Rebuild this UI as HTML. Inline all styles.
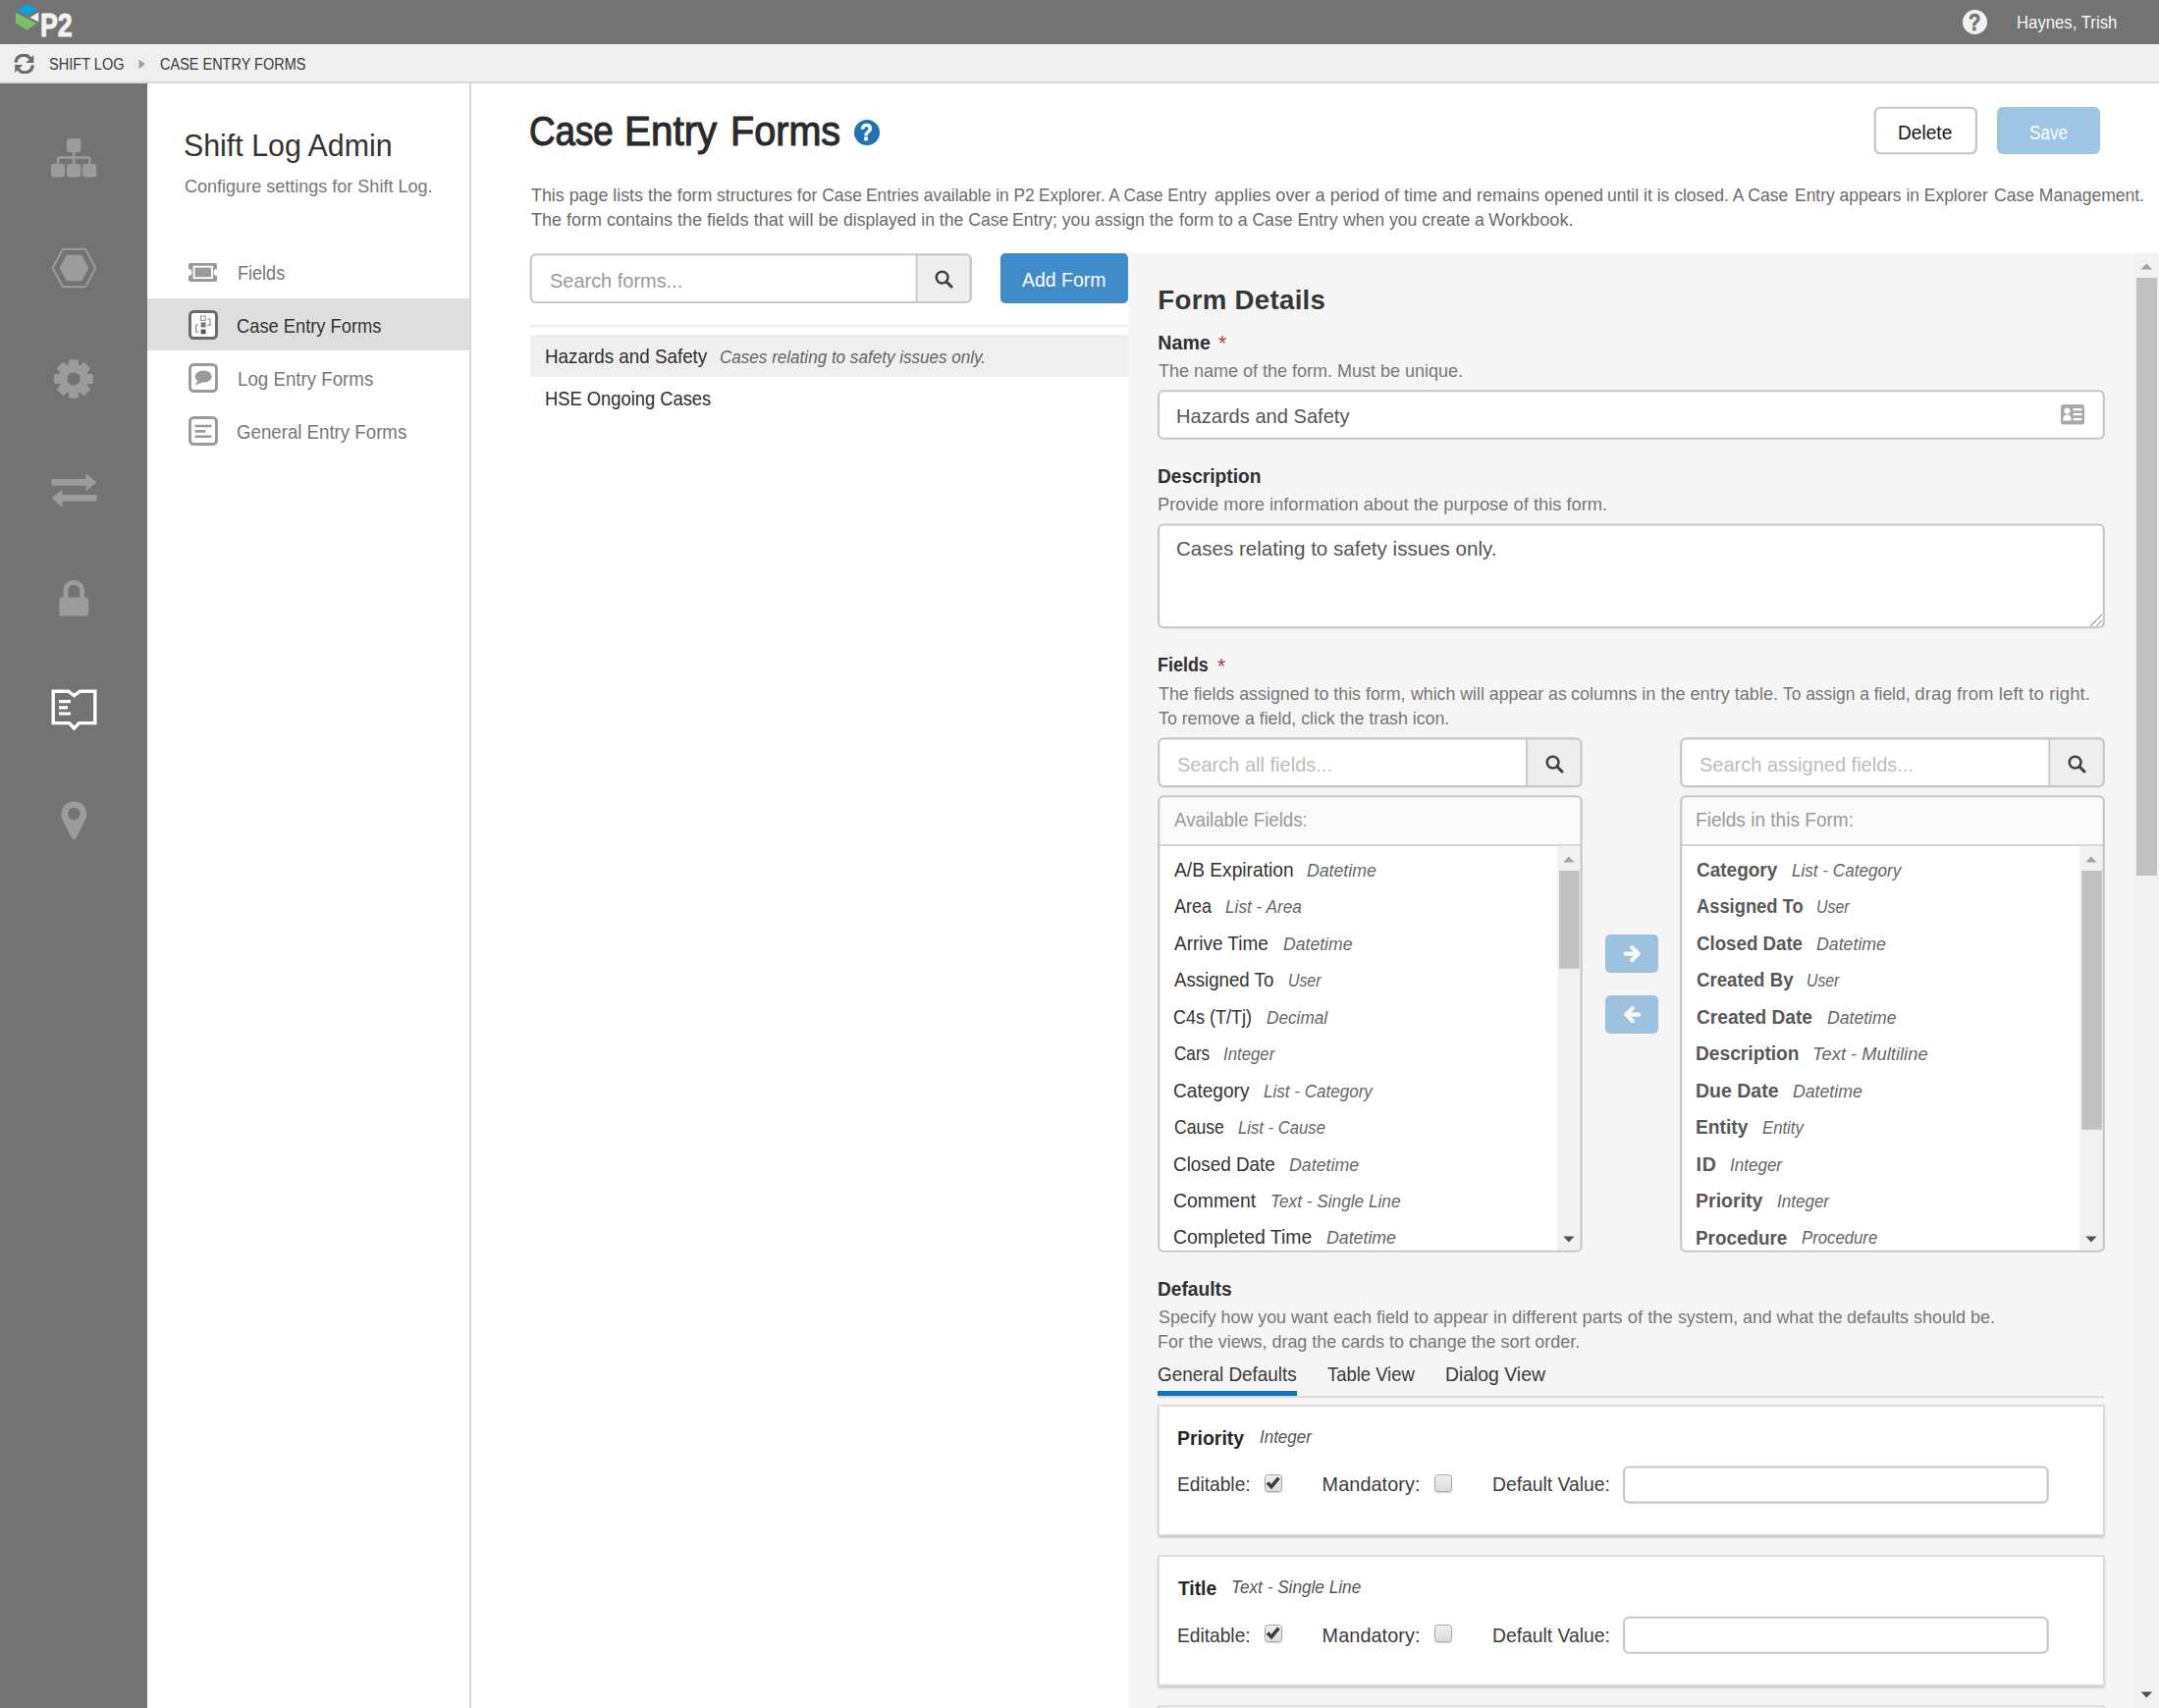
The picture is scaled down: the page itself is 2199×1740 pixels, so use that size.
<!DOCTYPE html>
<html lang="en"><head><meta charset="utf-8"><title>Case Entry Forms</title>
<style>
html,body{margin:0;padding:0}
body{width:2199px;height:1740px;background:#fff;font-family:"Liberation Sans", sans-serif;}
#r{position:absolute;left:0;top:0;width:2199px;height:1740px;overflow:hidden;background:#fff}
#r>div,#r>svg{position:absolute;box-sizing:border-box}
.t{white-space:pre;transform-origin:0 0}
.g{left:0;top:0}
.g>span{position:absolute;display:block}
</style></head>
<body>
<div id="r">
<div style="left:0px;top:0px;width:2199px;height:45px;background:#737373;"></div>
<div style="left:0px;top:45px;width:2199px;height:38px;background:#efefef;"></div>
<div style="left:0px;top:83px;width:2199px;height:2px;background:#dadada;"></div>
<div style="left:0px;top:85px;width:150px;height:1655px;background:#737373;"></div>
<div style="left:478px;top:85px;width:2px;height:1655px;background:#d6d6d6;"></div>
<div style="left:150px;top:304px;width:328px;height:53px;background:#dedede;"></div>
<svg style="left:14px;top:3px" width="64" height="37" viewBox="0 0 64 37">
<polygon points="3.6,6.8 13.6,0.9 23.8,6.3 13.6,12.9" fill="#0ea1db"/>
<polygon points="1.9,9.75 23.4,20.7 13.6,27.8 1.9,20.6" fill="#7cbf6a"/>
<polygon points="16.4,14.8 25.3,9.6 25.3,19.2" fill="#f2f2f2"/>
</svg>
<div class="t" style="left:40.80px;top:9.41px;font-size:33.4px;line-height:33.4px;color:#f2f2f2;transform:scaleX(0.8022);font-weight:700;-webkit-text-stroke:1.0px #f2f2f2;">P2</div>
<div style="left:1998.7px;top:10px;width:25.4px;height:25.4px;border-radius:13px;background:#f2f2f2"></div>
<div class="t" style="left:2005.27px;top:12.25px;font-size:23px;line-height:23px;color:#737373;transform:scaleX(0.8750);font-weight:700;-webkit-text-stroke:0.7px #737373;">?</div>
<div class="t" style="left:2054.10px;top:14.29px;font-size:18.6px;line-height:18.6px;color:#f7f7f7;transform:scaleX(0.9000);">Haynes, Trish</div>
<svg style="left:14px;top:55px" width="22" height="20" viewBox="0 0 22 20">
<path d="M2.2 8.6 A8 8 0 0 1 16.8 4.6" fill="none" stroke="#6a6a6a" stroke-width="3.2"/>
<polygon points="20.3,1 20.3,9 12.3,9" fill="#6a6a6a"/>
<path d="M19.3 11.4 A8 8 0 0 1 4.7 15.4" fill="none" stroke="#6a6a6a" stroke-width="3.2"/>
<polygon points="1.2,19 1.2,11 9.2,11" fill="#6a6a6a"/>
</svg>
<div class="t" style="left:49.50px;top:56.98px;font-size:17.2px;line-height:17.2px;color:#3a3a3a;transform:scaleX(0.8467);">SHIFT LOG</div>
<svg style="left:141px;top:60px" width="8" height="11" viewBox="0 0 8 11"><polygon points="0.5,0.5 7,5.3 0.5,10.2" fill="#a0a0a0"/></svg>
<div class="t" style="left:162.50px;top:56.98px;font-size:17.2px;line-height:17.2px;color:#3a3a3a;transform:scaleX(0.8431);">CASE ENTRY FORMS</div>
<svg style="left:52px;top:141px" width="47" height="40" viewBox="0 0 47 40" fill="#9c9c9c">
<rect x="16" y="0" width="14.5" height="14" rx="3"/>
<rect x="0" y="26" width="14" height="13.6" rx="3"/><rect x="16" y="26" width="14.5" height="13.6" rx="3"/><rect x="32" y="26" width="14.3" height="13.6" rx="3"/>
<path d="M23.2 13 V27 M7 27 V21.5 Q7 19.5 9 19.5 H37.4 Q39.4 19.5 39.4 21.5 V27" fill="none" stroke="#9c9c9c" stroke-width="2.6"/>
</svg>
<svg style="left:52px;top:252px" width="47" height="42" viewBox="0 0 47 42">
<polygon points="1.6,21 12,1.8 35,1.8 45.4,21 35,40.2 12,40.2" fill="none" stroke="#9c9c9c" stroke-width="1.9"/>
<polygon points="8.6,21 15.8,7.8 31.2,7.8 38.4,21 31.2,34.2 15.8,34.2" fill="#9c9c9c"/>
</svg>
<svg style="left:55px;top:366px" width="40" height="40" viewBox="-20 -20 40 40" fill="#9c9c9c">
<rect x="-4.9" y="-19.8" width="9.8" height="9" rx="1.4" transform="rotate(0)"/><rect x="-4.9" y="-19.8" width="9.8" height="9" rx="1.4" transform="rotate(45)"/><rect x="-4.9" y="-19.8" width="9.8" height="9" rx="1.4" transform="rotate(90)"/><rect x="-4.9" y="-19.8" width="9.8" height="9" rx="1.4" transform="rotate(135)"/><rect x="-4.9" y="-19.8" width="9.8" height="9" rx="1.4" transform="rotate(180)"/><rect x="-4.9" y="-19.8" width="9.8" height="9" rx="1.4" transform="rotate(225)"/><rect x="-4.9" y="-19.8" width="9.8" height="9" rx="1.4" transform="rotate(270)"/><rect x="-4.9" y="-19.8" width="9.8" height="9" rx="1.4" transform="rotate(315)"/><circle r="15.2"/><circle r="6.6" fill="#737373"/></svg>
<svg style="left:52px;top:482px" width="47" height="36" viewBox="0 0 47 36" fill="#9c9c9c">
<rect x="0.5" y="6" width="36.5" height="6.8" rx="1"/><polygon points="35.5,0 46.5,9.2 35.5,18.4"/>
<rect x="10" y="22" width="36.5" height="6.8" rx="1"/><polygon points="11.5,16.4 0.5,25.6 11.5,35"/>
</svg>
<svg style="left:60px;top:591px" width="31" height="37" viewBox="0 0 31 37">
<path d="M7 19 V10.6 A8.3 8.3 0 0 1 23.6 10.6 V19" fill="none" stroke="#9c9c9c" stroke-width="4.8"/>
<rect x="0.4" y="17.6" width="29.8" height="18.8" rx="2.6" fill="#9c9c9c"/>
</svg>
<svg style="left:52px;top:702px" width="47" height="43" viewBox="0 0 47 43">
<path d="M2.2 2.2 H17.5 L23.5 6.6 L29.5 2.2 H44.8 V34.6 H28.5 L23.5 40 L18.5 34.6 H2.2 Z" fill="none" stroke="#fff" stroke-width="3.4" stroke-linejoin="miter"/>
<path d="M8 12.6 H20 M8 18.8 H17 M8 25 H20" stroke="#fff" stroke-width="3.2" fill="none"/>
</svg>
<svg style="left:62px;top:816px" width="27" height="40" viewBox="0 0 27 40">
<path d="M13.3 0.4 C5.8 0.4 0.4 5.8 0.4 13 C0.4 16 1.2 18.2 2.4 20.6 L11 37.6 Q13.3 41 15.6 37.6 L24.2 20.6 C25.4 18.2 26.2 16 26.2 13 C26.2 5.8 20.8 0.4 13.3 0.4 Z" fill="#9c9c9c"/>
<circle cx="13.3" cy="13" r="6.2" fill="#737373"/></svg>
<div class="t" style="left:187.00px;top:133.17px;font-size:30.5px;line-height:30.5px;color:#333;transform:scaleX(0.9950);">Shift Log Admin</div>
<div class="t" style="left:187.80px;top:181.07px;font-size:18.5px;line-height:18.5px;color:#777;transform:scaleX(0.9744);">Configure settings for Shift Log.</div>
<svg style="left:191px;top:267px" width="31" height="21" viewBox="0 0 31 21">
<path d="M3 1 H28 Q30 1 30 3 V7 A3.4 3.4 0 0 0 30 14 V18 Q30 20 28 20 H3 Q1 20 1 18 V14 A3.4 3.4 0 0 0 1 7 V3 Q1 1 3 1 Z" fill="#9a9a9a"/>
<rect x="5.6" y="3.8" width="20.3" height="13.2" fill="#fff"/><rect x="7.5" y="5.6" width="16.5" height="9.6" fill="#9a9a9a"/></svg>
<div class="t" style="left:241.69px;top:268.77px;font-size:19.8px;line-height:19.8px;color:#777;transform:scaleX(0.9137);">Fields</div>
<svg style="left:192px;top:316px" width="30" height="30" viewBox="0 0 30 30">
<rect x="1.5" y="1.5" width="27" height="27" rx="3.8" fill="#fff" stroke="#6a6a6a" stroke-width="2.9"/>
<rect x="12.6" y="6" width="4.6" height="4.4" fill="none" stroke="#888" stroke-width="1"/>
<rect x="12.6" y="12.4" width="5" height="5" fill="#777"/><rect x="12.6" y="19.6" width="5" height="4.6" fill="#555"/>
<path d="M10.4 15 H7.6 V22 H10.4 M19.4 9 H22 V15.4 H19.4" fill="none" stroke="#888" stroke-width="1.1"/>
</svg>
<div class="t" style="left:241.28px;top:322.77px;font-size:19.8px;line-height:19.8px;color:#333;transform:scaleX(0.9250);">Case Entry Forms</div>
<svg style="left:192px;top:370px" width="30" height="30" viewBox="0 0 30 30">
<rect x="1.5" y="1.5" width="27" height="27" rx="3.8" fill="#fff" stroke="#9a9a9a" stroke-width="2.9"/>
<ellipse cx="15.2" cy="13.6" rx="8.6" ry="6.2" fill="#9a9a9a"/><polygon points="9.4,17.4 7,22.6 14,19.4" fill="#9a9a9a"/></svg>
<div class="t" style="left:241.65px;top:376.77px;font-size:19.8px;line-height:19.8px;color:#777;transform:scaleX(0.9455);">Log Entry Forms</div>
<svg style="left:192px;top:424px" width="30" height="30" viewBox="0 0 30 30">
<rect x="1.5" y="1.5" width="27" height="27" rx="3.8" fill="#fff" stroke="#9a9a9a" stroke-width="2.9"/>
<path d="M6.6 10 H23.4 M6.6 15.4 H17.4 M6.6 20.8 H23.4" stroke="#9a9a9a" stroke-width="2.6" fill="none"/></svg>
<div class="t" style="left:241.26px;top:430.77px;font-size:19.8px;line-height:19.8px;color:#777;transform:scaleX(0.9437);">General Entry Forms</div>
<div class="g"><span class="t" style="left:539.40px;top:112.90px;font-size:42px;line-height:42px;color:#2a2a2a;transform:scaleX(0.8744);-webkit-text-stroke:1.1px #2a2a2a;">Case</span> <span class="t" style="left:636.46px;top:112.90px;font-size:42px;line-height:42px;color:#2a2a2a;transform:scaleX(0.9618);-webkit-text-stroke:1.1px #2a2a2a;">Entry</span> <span class="t" style="left:744.02px;top:112.90px;font-size:42px;line-height:42px;color:#2a2a2a;transform:scaleX(0.9427);-webkit-text-stroke:1.1px #2a2a2a;">Forms</span></div>
<div style="left:869.5px;top:122px;width:26px;height:26px;border-radius:13px;background:#1f72b3"></div>
<div class="t" style="left:876.14px;top:124.45px;font-size:23px;line-height:23px;color:#fff;transform:scaleX(0.9083);font-weight:700;-webkit-text-stroke:0.5px #fff;">?</div>
<div class="g"><span class="t" style="left:540.60px;top:190.18px;font-size:18.5px;line-height:18.5px;color:#6b6b6b;transform:scaleX(0.9639);">This page lists the form </span><span class="t" style="left:729.90px;top:190.18px;font-size:18.5px;line-height:18.5px;color:#6b6b6b;transform:scaleX(0.9473);">structures for Case </span><span class="t" style="left:881.86px;top:190.18px;font-size:18.5px;line-height:18.5px;color:#6b6b6b;transform:scaleX(0.9379);">Entries available in P2 </span><span class="t" style="left:1058.38px;top:190.18px;font-size:18.5px;line-height:18.5px;color:#6b6b6b;transform:scaleX(0.9247);">Explorer. A Case Entry </span><span class="t" style="left:1237.10px;top:190.18px;font-size:18.5px;line-height:18.5px;color:#6b6b6b;transform:scaleX(0.9779);">applies over a period of </span><span class="t" style="left:1430.20px;top:190.18px;font-size:18.5px;line-height:18.5px;color:#6b6b6b;transform:scaleX(0.9719);">time and remains opened </span><span class="t" style="left:1637.15px;top:190.18px;font-size:18.5px;line-height:18.5px;color:#6b6b6b;transform:scaleX(0.9477);">until it is closed. A Case </span><span class="t" style="left:1828.16px;top:190.18px;font-size:18.5px;line-height:18.5px;color:#6b6b6b;transform:scaleX(0.9426);">Entry appears in Explorer </span><span class="t" style="left:2030.70px;top:190.18px;font-size:18.5px;line-height:18.5px;color:#6b6b6b;transform:scaleX(0.9475);">Case Management.</span></div>
<div class="g"><span class="t" style="left:540.60px;top:215.18px;font-size:18.5px;line-height:18.5px;color:#6b6b6b;transform:scaleX(0.9730);">The form contains the </span><span class="t" style="left:719.70px;top:215.18px;font-size:18.5px;line-height:18.5px;color:#6b6b6b;transform:scaleX(0.9860);">fields that will be </span><span class="t" style="left:858.60px;top:215.18px;font-size:18.5px;line-height:18.5px;color:#6b6b6b;transform:scaleX(0.9515);">displayed in the Case </span><span class="t" style="left:1030.85px;top:215.18px;font-size:18.5px;line-height:18.5px;color:#6b6b6b;transform:scaleX(0.9505);">Entry; you assign the </span><span class="t" style="left:1200.90px;top:215.18px;font-size:18.5px;line-height:18.5px;color:#6b6b6b;transform:scaleX(0.9520);">form to a Case Entry </span><span class="t" style="left:1368.25px;top:215.18px;font-size:18.5px;line-height:18.5px;color:#6b6b6b;transform:scaleX(0.9519);">when you create a </span><span class="t" style="left:1516.10px;top:215.18px;font-size:18.5px;line-height:18.5px;color:#6b6b6b;transform:scaleX(0.9834);">Workbook.</span></div>
<svg style="left:1906px;top:106px" width="110" height="54"><g transform="translate(-1906,-106)"><rect x="1909.73" y="109.73" width="103.15" height="46.55" rx="5.5" fill="#fff"/><rect x="1909.73" y="109.73" width="103.15" height="46.55" rx="5.5" fill="none" stroke="#c4c4c4" stroke-width="2.15"/></g></svg>
<div class="t" style="left:1933.24px;top:124.80px;font-size:20px;line-height:20px;color:#151515;transform:scaleX(0.9561);">Delete</div>
<div style="left:2034px;top:109px;width:104.5px;height:48px;border-radius:6px;background:#9fc5e5"></div>
<div class="t" style="left:2067.20px;top:124.80px;font-size:20px;line-height:20px;color:#fdfdfd;transform:scaleX(0.8534);">Save</div>
<svg style="left:537px;top:256px" width="455" height="56"><g transform="translate(-537,-256)"><rect x="540.73" y="259.22" width="448.05" height="48.75" rx="5" fill="#fff"/><path d="M933 259.4 H983.6 A5 5 0 0 1 988.6 264.4 V302.8 A5 5 0 0 1 983.6 307.8 H933 Z" fill="#eeeeee"/><rect x="932.6" y="258.5" width="1.8" height="50.19999999999999" fill="#c6c6c6"/><rect x="540.73" y="259.22" width="448.05" height="48.75" rx="5" fill="none" stroke="#c6c6c6" stroke-width="2.15"/></g></svg>
<div class="t" style="left:560.30px;top:275.15px;font-size:21px;line-height:21px;color:#9a9a9a;transform:scaleX(0.9499);">Search forms...</div>
<svg style="left:952px;top:275px" width="19" height="19" viewBox="0 0 19 19"><circle cx="7.6" cy="7.6" r="5.9" fill="none" stroke="#404040" stroke-width="2.5"/><path d="M12 12 L17 17" stroke="#404040" stroke-width="3.1" stroke-linecap="round"/></svg>
<div style="left:1019px;top:258.4px;width:130px;height:50.4px;border-radius:5px;background:#408bca"></div>
<div class="t" style="left:1041.40px;top:274.90px;font-size:20px;line-height:20px;color:#fff;transform:scaleX(0.9731);">Add Form</div>
<div style="left:540px;top:331.3px;width:609px;height:1.7px;background:#ececec;"></div>
<div style="left:540px;top:341.3px;width:609px;height:42.4px;background:#efefef;"></div>
<div class="t" style="left:554.65px;top:353.77px;font-size:19.8px;line-height:19.8px;color:#2e2e2e;transform:scaleX(0.9512);">Hazards and Safety</div>
<div class="t" style="left:732.58px;top:354.88px;font-size:18.5px;line-height:18.5px;color:#666;transform:scaleX(0.9229);font-style:italic;">Cases relating to safety issues only.</div>
<div class="t" style="left:554.67px;top:396.77px;font-size:19.8px;line-height:19.8px;color:#2e2e2e;transform:scaleX(0.9271);">HSE Ongoing Cases</div>
<div style="left:1149px;top:258px;width:1050px;height:1482px;background:#f5f5f5;"></div>
<div style="left:2174px;top:258px;width:25px;height:1482px;background:#f1f1f1;"></div>
<div style="left:2176px;top:283px;width:21px;height:609px;background:#c1c1c1;"></div>
<svg style="left:2180px;top:267.5px" width="13" height="7" viewBox="0 0 13 7"><polygon points="0.5,6.5 6.3,0.4 12.2,6.5" fill="#a3a3a3"/></svg>
<svg style="left:2180px;top:1722.5px" width="13" height="7" viewBox="0 0 13 7"><polygon points="0.5,0.5 6.3,6.6 12.2,0.5" fill="#505050"/></svg>
<div class="t" style="left:1179.30px;top:292.14px;font-size:27.6px;line-height:27.6px;color:#363636;letter-spacing:0.319px;font-weight:700;">Form Details</div>
<div class="t" style="left:1179.30px;top:339.74px;font-size:19.6px;line-height:19.6px;color:#303030;letter-spacing:0.077px;font-weight:700;">Name</div>
<div class="t" style="left:1241.00px;top:338.88px;font-size:22.5px;line-height:22.5px;color:#a94442;transform:scaleX(0.9333);">*</div>
<div class="t" style="left:1179.80px;top:369.07px;font-size:18.5px;line-height:18.5px;color:#777;transform:scaleX(0.9728);">The name of the form. Must be unique.</div>
<svg style="left:1176px;top:395px" width="970" height="55"><g transform="translate(-1176,-395)"><rect x="1180.03" y="398.22" width="962.75" height="48.55" rx="5" fill="#fff"/><rect x="1180.03" y="398.22" width="962.75" height="48.55" rx="5" fill="none" stroke="#c6c6c6" stroke-width="2.15"/></g></svg>
<div class="t" style="left:1198.44px;top:413.45px;font-size:21px;line-height:21px;color:#555;transform:scaleX(0.9568);">Hazards and Safety</div>
<svg style="left:2099px;top:412.4px" width="24" height="20.4" viewBox="0 0 24 20.4">
<rect x="0" y="0" width="24" height="20.4" rx="2.6" fill="#a9a9a9"/>
<circle cx="6.4" cy="6.6" r="3.1" fill="#fff"/><path d="M2.2 16.6 Q2.2 10.6 6.4 10.6 Q10.6 10.6 10.6 16.6 Z" fill="#fff"/>
<path d="M12.6 5.2 H21.4 M12.6 10.2 H21.4 M12.6 15.2 H21.4" stroke="#fff" stroke-width="2.2"/></svg>
<div class="t" style="left:1179.32px;top:475.94px;font-size:19.6px;line-height:19.6px;color:#303030;transform:scaleX(0.9781);font-weight:700;">Description</div>
<div class="t" style="left:1179.21px;top:504.88px;font-size:18.5px;line-height:18.5px;color:#777;transform:scaleX(0.9902);">Provide more information about the purpose of this form.</div>
<svg style="left:1176px;top:531px" width="970" height="112"><g transform="translate(-1176,-531)"><rect x="1180.03" y="534.52" width="962.75" height="104.75" rx="5" fill="#fff"/><rect x="1180.03" y="534.52" width="962.75" height="104.75" rx="5" fill="none" stroke="#c6c6c6" stroke-width="2.15"/></g></svg>
<div class="t" style="left:1197.82px;top:548.45px;font-size:21px;line-height:21px;color:#555;transform:scaleX(0.9791);">Cases relating to safety issues only.</div>
<svg style="left:2128px;top:625px" width="14" height="14" viewBox="0 0 14 14"><path d="M1 13 L13 1 M7.2 13 L13 7.2" stroke="#666" stroke-width="0.9"/></svg>
<div class="t" style="left:1179.38px;top:668.44px;font-size:19.6px;line-height:19.6px;color:#303030;transform:scaleX(0.9153);font-weight:700;">Fields</div>
<div class="t" style="left:1240.00px;top:667.58px;font-size:22.5px;line-height:22.5px;color:#a94442;transform:scaleX(0.9333);">*</div>
<div class="g"><span class="t" style="left:1179.80px;top:697.88px;font-size:18.5px;line-height:18.5px;color:#777;transform:scaleX(0.9631);">The fields assigned to this form, </span><span class="t" style="left:1437.26px;top:697.88px;font-size:18.5px;line-height:18.5px;color:#777;transform:scaleX(0.9590);">which will appear as </span><span class="t" style="left:1600.00px;top:697.88px;font-size:18.5px;line-height:18.5px;color:#777;transform:scaleX(0.9770);">columns in the entry table. </span><span class="t" style="left:1816.00px;top:697.88px;font-size:18.5px;line-height:18.5px;color:#777;transform:scaleX(0.9395);">To assign a field, </span><span class="t" style="left:1950.30px;top:697.88px;font-size:18.5px;line-height:18.5px;color:#777;letter-spacing:0.123px;">drag from left to right.</span></div>
<div class="t" style="left:1179.80px;top:722.88px;font-size:18.5px;line-height:18.5px;color:#777;transform:scaleX(0.9605);">To remove a field, click the trash icon.</div>
<svg style="left:1177px;top:749px" width="437" height="56"><g transform="translate(-1177,-749)"><rect x="1180.23" y="752.43" width="430.35" height="48.65" rx="5" fill="#fff"/><path d="M1554.6 752.6 H1605.3999999999999 A5 5 0 0 1 1610.3999999999999 757.6 V795.9 A5 5 0 0 1 1605.3999999999999 800.9 H1554.6 Z" fill="#eeeeee"/><rect x="1554.1999999999998" y="751.7" width="1.8" height="50.09999999999991" fill="#c6c6c6"/><rect x="1180.23" y="752.43" width="430.35" height="48.65" rx="5" fill="none" stroke="#c6c6c6" stroke-width="2.15"/></g></svg>
<div class="t" style="left:1198.80px;top:768.35px;font-size:21px;line-height:21px;color:#bcbcbc;transform:scaleX(0.9530);">Search all fields...</div>
<svg style="left:1574.4px;top:768.6px" width="19" height="19" viewBox="0 0 19 19"><circle cx="7.6" cy="7.6" r="5.9" fill="none" stroke="#404040" stroke-width="2.5"/><path d="M12 12 L17 17" stroke="#404040" stroke-width="3.1" stroke-linecap="round"/></svg>
<svg style="left:1709px;top:749px" width="437" height="56"><g transform="translate(-1709,-749)"><rect x="1712.23" y="752.43" width="430.55" height="48.65" rx="5" fill="#fff"/><path d="M2086.8 752.6 H2137.6 A5 5 0 0 1 2142.6 757.6 V795.9 A5 5 0 0 1 2137.6 800.9 H2086.8 Z" fill="#eeeeee"/><rect x="2086.4" y="751.7" width="1.8" height="50.09999999999991" fill="#c6c6c6"/><rect x="1712.23" y="752.43" width="430.55" height="48.65" rx="5" fill="none" stroke="#c6c6c6" stroke-width="2.15"/></g></svg>
<div class="t" style="left:1730.80px;top:768.35px;font-size:21px;line-height:21px;color:#bcbcbc;transform:scaleX(0.9526);">Search assigned fields...</div>
<svg style="left:2106.4px;top:768.6px" width="19" height="19" viewBox="0 0 19 19"><circle cx="7.6" cy="7.6" r="5.9" fill="none" stroke="#404040" stroke-width="2.5"/><path d="M12 12 L17 17" stroke="#404040" stroke-width="3.1" stroke-linecap="round"/></svg>
<svg style="left:1177px;top:808px" width="437" height="470"><g transform="translate(-1177,-808)"><rect x="1180.23" y="811.23" width="430.35" height="463.55" rx="5" fill="#fff"/><path d="M1181.3 860.4 V816.3 Q1181.3 812.3 1185.3 812.3 H1605.5 Q1609.5 812.3 1609.5 816.3 V860.4 Z" fill="#fafafa"/><rect x="1179.5" y="860.3" width="431.79999999999995" height="1.5" fill="#c8c8c8"/><path d="M1586.1 861.8 H1609.5 V1269.7 Q1609.5 1273.7 1605.5 1273.7 H1586.1 Z" fill="#f1f1f1"/><rect x="1588.1" y="887" width="20.600000000000136" height="99.79999999999995" fill="#c1c1c1"/><rect x="1180.23" y="811.23" width="430.35" height="463.55" rx="5" fill="none" stroke="#c6c6c6" stroke-width="2.15"/></g></svg>
<div class="t" style="left:1196.40px;top:826.27px;font-size:19.8px;line-height:19.8px;color:#999;transform:scaleX(0.9453);">Available Fields:</div>
<svg style="left:1592.1px;top:871.6px" width="12" height="7" viewBox="0 0 12 7"><polygon points="0.3,6.6 5.9,0.4 11.5,6.6" fill="#a3a3a3"/></svg>
<svg style="left:1592.1px;top:1258.6px" width="12" height="7" viewBox="0 0 12 7"><polygon points="0.3,0.4 5.9,6.6 11.5,0.4" fill="#505050"/></svg>
<svg style="left:1709px;top:808px" width="437" height="470"><g transform="translate(-1709,-808)"><rect x="1712.23" y="811.23" width="430.55" height="463.55" rx="5" fill="#fff"/><path d="M1713.3 860.4 V816.3 Q1713.3 812.3 1717.3 812.3 H2137.7 Q2141.7 812.3 2141.7 816.3 V860.4 Z" fill="#fafafa"/><rect x="1711.5" y="860.3" width="432.0" height="1.5" fill="#c8c8c8"/><path d="M2118.3 861.8 H2141.7 V1269.7 Q2141.7 1273.7 2137.7 1273.7 H2118.3 Z" fill="#f1f1f1"/><rect x="2120.3" y="887" width="20.59999999999991" height="263.70000000000005" fill="#c1c1c1"/><rect x="1712.23" y="811.23" width="430.55" height="463.55" rx="5" fill="none" stroke="#c6c6c6" stroke-width="2.15"/></g></svg>
<div class="t" style="left:1727.44px;top:826.27px;font-size:19.8px;line-height:19.8px;color:#999;transform:scaleX(0.9637);">Fields in this Form:</div>
<svg style="left:2124.3px;top:871.6px" width="12" height="7" viewBox="0 0 12 7"><polygon points="0.3,6.6 5.9,0.4 11.5,6.6" fill="#a3a3a3"/></svg>
<svg style="left:2124.3px;top:1258.6px" width="12" height="7" viewBox="0 0 12 7"><polygon points="0.3,0.4 5.9,6.6 11.5,0.4" fill="#505050"/></svg>
<div class="t" style="left:1196.40px;top:876.77px;font-size:19.8px;line-height:19.8px;color:#333;transform:scaleX(0.9699);">A/B Expiration</div>
<div class="t" style="left:1331.30px;top:877.88px;font-size:18.5px;line-height:18.5px;color:#666;transform:scaleX(0.9561);font-style:italic;">Datetime</div>
<div class="t" style="left:1196.40px;top:914.07px;font-size:19.8px;line-height:19.8px;color:#333;transform:scaleX(0.9071);">Area</div>
<div class="t" style="left:1248.30px;top:915.17px;font-size:18.5px;line-height:18.5px;color:#666;transform:scaleX(0.9308);font-style:italic;">List - Area</div>
<div class="t" style="left:1196.40px;top:951.77px;font-size:19.8px;line-height:19.8px;color:#333;transform:scaleX(0.9574);">Arrive Time</div>
<div class="t" style="left:1306.80px;top:952.88px;font-size:18.5px;line-height:18.5px;color:#666;transform:scaleX(0.9520);font-style:italic;">Datetime</div>
<div class="t" style="left:1196.40px;top:988.97px;font-size:19.8px;line-height:19.8px;color:#333;transform:scaleX(0.9428);">Assigned To</div>
<div class="t" style="left:1311.64px;top:990.08px;font-size:18.5px;line-height:18.5px;color:#666;transform:scaleX(0.8561);font-style:italic;">User</div>
<div class="t" style="left:1195.49px;top:1026.77px;font-size:19.8px;line-height:19.8px;color:#333;transform:scaleX(0.9106);">C4s (T/Tj)</div>
<div class="t" style="left:1289.50px;top:1027.88px;font-size:18.5px;line-height:18.5px;color:#666;transform:scaleX(0.9305);font-style:italic;">Decimal</div>
<div class="t" style="left:1195.53px;top:1063.97px;font-size:19.8px;line-height:19.8px;color:#333;transform:scaleX(0.8661);">Cars</div>
<div class="t" style="left:1246.30px;top:1065.08px;font-size:18.5px;line-height:18.5px;color:#666;transform:scaleX(0.9070);font-style:italic;">Integer</div>
<div class="t" style="left:1195.43px;top:1101.77px;font-size:19.8px;line-height:19.8px;color:#333;transform:scaleX(0.9651);">Category</div>
<div class="t" style="left:1287.00px;top:1102.88px;font-size:18.5px;line-height:18.5px;color:#666;transform:scaleX(0.9218);font-style:italic;">List - Category</div>
<div class="t" style="left:1195.51px;top:1138.97px;font-size:19.8px;line-height:19.8px;color:#333;transform:scaleX(0.8882);">Cause</div>
<div class="t" style="left:1260.80px;top:1140.08px;font-size:18.5px;line-height:18.5px;color:#666;transform:scaleX(0.9013);font-style:italic;">List - Cause</div>
<div class="t" style="left:1195.45px;top:1176.77px;font-size:19.8px;line-height:19.8px;color:#333;transform:scaleX(0.9541);">Closed Date</div>
<div class="t" style="left:1313.00px;top:1177.88px;font-size:18.5px;line-height:18.5px;color:#666;transform:scaleX(0.9602);font-style:italic;">Datetime</div>
<div class="t" style="left:1195.42px;top:1213.97px;font-size:19.8px;line-height:19.8px;color:#333;transform:scaleX(0.9807);">Comment</div>
<div class="t" style="left:1293.57px;top:1215.08px;font-size:18.5px;line-height:18.5px;color:#666;transform:scaleX(0.9314);font-style:italic;">Text - Single Line</div>
<div class="t" style="left:1195.42px;top:1251.37px;font-size:19.8px;line-height:19.8px;color:#333;transform:scaleX(0.9806);">Completed Time</div>
<div class="t" style="left:1351.30px;top:1252.47px;font-size:18.5px;line-height:18.5px;color:#666;transform:scaleX(0.9588);font-style:italic;">Datetime</div>
<div class="t" style="left:1728.40px;top:876.94px;font-size:19.6px;line-height:19.6px;color:#585858;transform:scaleX(0.9691);font-weight:700;">Category</div>
<div class="t" style="left:1824.50px;top:877.88px;font-size:18.5px;line-height:18.5px;color:#666;transform:scaleX(0.9242);font-style:italic;">List - Category</div>
<div class="t" style="left:1728.40px;top:914.24px;font-size:19.6px;line-height:19.6px;color:#585858;transform:scaleX(0.9350);font-weight:700;">Assigned To</div>
<div class="t" style="left:1850.14px;top:915.17px;font-size:18.5px;line-height:18.5px;color:#666;transform:scaleX(0.8612);font-style:italic;">User</div>
<div class="t" style="left:1728.40px;top:951.94px;font-size:19.6px;line-height:19.6px;color:#585858;transform:scaleX(0.9538);font-weight:700;">Closed Date</div>
<div class="t" style="left:1850.30px;top:952.88px;font-size:18.5px;line-height:18.5px;color:#666;transform:scaleX(0.9588);font-style:italic;">Datetime</div>
<div class="t" style="left:1728.40px;top:989.14px;font-size:19.6px;line-height:19.6px;color:#585858;transform:scaleX(0.9522);font-weight:700;">Created By</div>
<div class="t" style="left:1839.95px;top:990.08px;font-size:18.5px;line-height:18.5px;color:#666;transform:scaleX(0.8535);font-style:italic;">User</div>
<div class="t" style="left:1728.40px;top:1026.94px;font-size:19.6px;line-height:19.6px;color:#585858;transform:scaleX(0.9762);font-weight:700;">Created Date</div>
<div class="t" style="left:1860.80px;top:1027.88px;font-size:18.5px;line-height:18.5px;color:#666;transform:scaleX(0.9520);font-style:italic;">Datetime</div>
<div class="t" style="left:1727.42px;top:1064.14px;font-size:19.6px;line-height:19.6px;color:#585858;transform:scaleX(0.9791);font-weight:700;">Description</div>
<div class="t" style="left:1845.51px;top:1065.08px;font-size:18.5px;line-height:18.5px;color:#666;transform:scaleX(0.9916);font-style:italic;">Text - Multiline</div>
<div class="t" style="left:1727.41px;top:1101.94px;font-size:19.6px;line-height:19.6px;color:#585858;transform:scaleX(0.9949);font-weight:700;">Due Date</div>
<div class="t" style="left:1826.00px;top:1102.88px;font-size:18.5px;line-height:18.5px;color:#666;transform:scaleX(0.9561);font-style:italic;">Datetime</div>
<div class="t" style="left:1727.42px;top:1139.14px;font-size:19.6px;line-height:19.6px;color:#585858;transform:scaleX(0.9826);font-weight:700;">Entity</div>
<div class="t" style="left:1794.50px;top:1140.08px;font-size:18.5px;line-height:18.5px;color:#666;transform:scaleX(0.9017);font-style:italic;">Entity</div>
<div class="t" style="left:1727.40px;top:1176.94px;font-size:19.6px;line-height:19.6px;color:#585858;letter-spacing:0.956px;font-weight:700;">ID</div>
<div class="t" style="left:1761.50px;top:1177.88px;font-size:18.5px;line-height:18.5px;color:#666;transform:scaleX(0.9207);font-style:italic;">Integer</div>
<div class="t" style="left:1727.40px;top:1214.14px;font-size:19.6px;line-height:19.6px;color:#585858;transform:scaleX(0.9985);font-weight:700;">Priority</div>
<div class="t" style="left:1809.50px;top:1215.08px;font-size:18.5px;line-height:18.5px;color:#666;transform:scaleX(0.9207);font-style:italic;">Integer</div>
<div class="t" style="left:1727.44px;top:1251.54px;font-size:19.6px;line-height:19.6px;color:#585858;transform:scaleX(0.9623);font-weight:700;">Procedure</div>
<div class="t" style="left:1834.50px;top:1252.47px;font-size:18.5px;line-height:18.5px;color:#666;transform:scaleX(0.9052);font-style:italic;">Procedure</div>
<div style="left:1635px;top:952px;width:53.8px;height:38.8px;border-radius:5px;background:#9cc2df"></div>
<svg style="left:1652.6px;top:962px" width="19" height="19" viewBox="0 0 19 19"><path d="M2.6 9.6 H14.5 M9.3 3.2 L15.7 9.6 L9.3 16" fill="none" stroke="#f9f9f9" stroke-width="4.2" stroke-linecap="round" stroke-linejoin="round"/></svg>
<div style="left:1635px;top:1014.2px;width:53.8px;height:38.8px;border-radius:5px;background:#9cc2df"></div>
<svg style="left:1652.6px;top:1024.2px" width="19" height="19" viewBox="0 0 19 19"><path d="M16.4 9.6 H4.5 M9.7 3.2 L3.3 9.6 L9.7 16" fill="none" stroke="#f9f9f9" stroke-width="4.2" stroke-linecap="round" stroke-linejoin="round"/></svg>
<div class="t" style="left:1179.32px;top:1303.94px;font-size:19.6px;line-height:19.6px;color:#303030;transform:scaleX(0.9777);font-weight:700;">Defaults</div>
<div class="g"><span class="t" style="left:1179.80px;top:1332.88px;font-size:18.5px;line-height:18.5px;color:#777;transform:scaleX(0.9654);">Specify how you want </span><span class="t" style="left:1357.50px;top:1332.88px;font-size:18.5px;line-height:18.5px;color:#777;transform:scaleX(0.9723);">each field to appear in </span><span class="t" style="left:1539.50px;top:1332.88px;font-size:18.5px;line-height:18.5px;color:#777;transform:scaleX(0.9980);">different parts of the </span><span class="t" style="left:1708.50px;top:1332.88px;font-size:18.5px;line-height:18.5px;color:#777;transform:scaleX(0.9586);">system, and what the </span><span class="t" style="left:1881.00px;top:1332.88px;font-size:18.5px;line-height:18.5px;color:#777;transform:scaleX(0.9730);">defaults should be.</span></div>
<div class="t" style="left:1179.23px;top:1357.88px;font-size:18.5px;line-height:18.5px;color:#777;transform:scaleX(0.9683);">For the views, drag the cards to change the sort order.</div>
<div class="t" style="left:1178.85px;top:1390.77px;font-size:19.8px;line-height:19.8px;color:#3a3a3a;transform:scaleX(0.9543);">General Defaults</div>
<div class="t" style="left:1351.80px;top:1390.77px;font-size:19.8px;line-height:19.8px;color:#3a3a3a;transform:scaleX(0.9311);">Table View</div>
<div class="t" style="left:1471.62px;top:1390.77px;font-size:19.8px;line-height:19.8px;color:#3a3a3a;transform:scaleX(0.9787);">Dialog View</div>
<div style="left:1179.3px;top:1422px;width:964.2px;height:1.8px;background:#dcdcdc;"></div>
<div style="left:1179.3px;top:1417px;width:141.5px;height:5.2px;background:#0d74ba;"></div>
<div style="left:1180px;top:1432.3px;width:963px;height:131.6px;background:#fff;box-shadow:0 2px 3px rgba(0,0,0,.26)"></div>
<svg style="left:1176px;top:1428px" width="970" height="139"><g transform="translate(-1176,-1428)"><rect x="1179.92" y="1431.92" width="962.95" height="131.95" rx="0.5" fill="#fff"/><rect x="1179.92" y="1431.92" width="962.95" height="131.95" rx="0.5" fill="none" stroke="#dadada" stroke-width="1.9500000000000002"/></g></svg>
<div class="t" style="left:1198.61px;top:1455.94px;font-size:19.6px;line-height:19.6px;color:#262626;transform:scaleX(0.9926);font-weight:700;">Priority</div>
<div class="t" style="left:1282.60px;top:1455.08px;font-size:18.5px;line-height:18.5px;color:#555;transform:scaleX(0.9173);font-style:italic;">Integer</div>
<div class="t" style="left:1198.63px;top:1503.37px;font-size:19.8px;line-height:19.8px;color:#3c3c3c;transform:scaleX(0.9693);">Editable:</div>
<div class="t" style="left:1346.60px;top:1503.37px;font-size:19.8px;line-height:19.8px;color:#3c3c3c;letter-spacing:0.105px;">Mandatory:</div>
<div class="t" style="left:1519.82px;top:1503.37px;font-size:19.8px;line-height:19.8px;color:#3c3c3c;transform:scaleX(0.9759);">Default Value:</div>
<div style="left:1287.6px;top:1501.6px;width:18.4px;height:18.4px;border:1px solid #a6a6a6;border-radius:3.5px;background:linear-gradient(#efefef,#dcdcdc);box-shadow:0 1px 1.5px rgba(0,0,0,.18)"></div>
<svg style="left:1289.2px;top:1503.2px" width="16" height="15" viewBox="0 0 16 15"><path d="M2 7.6 L5.9 11.6 L13.4 2.6" fill="none" stroke="#3c3c3c" stroke-width="3.6"/></svg>
<div style="left:1460.6px;top:1501.6px;width:18.4px;height:18.4px;border:1px solid #a6a6a6;border-radius:3.5px;background:linear-gradient(#efefef,#dcdcdc);box-shadow:0 1px 1.5px rgba(0,0,0,.18)"></div>
<svg style="left:1650px;top:1491px" width="439" height="43"><g transform="translate(-1650,-1491)"><rect x="1654.03" y="1494.53" width="431.55" height="36.05" rx="5" fill="#fff"/><rect x="1654.03" y="1494.53" width="431.55" height="36.05" rx="5" fill="none" stroke="#c6c6c6" stroke-width="2.15"/></g></svg>
<div style="left:1180px;top:1585.5px;width:963px;height:131.6px;background:#fff;box-shadow:0 2px 3px rgba(0,0,0,.26)"></div>
<svg style="left:1176px;top:1582px" width="970" height="139"><g transform="translate(-1176,-1582)"><rect x="1179.92" y="1585.12" width="962.95" height="131.95" rx="0.5" fill="#fff"/><rect x="1179.92" y="1585.12" width="962.95" height="131.95" rx="0.5" fill="none" stroke="#dadada" stroke-width="1.9500000000000002"/></g></svg>
<div class="t" style="left:1199.60px;top:1609.14px;font-size:19.6px;line-height:19.6px;color:#262626;transform:scaleX(0.9793);font-weight:700;">Title</div>
<div class="t" style="left:1254.27px;top:1608.28px;font-size:18.5px;line-height:18.5px;color:#555;transform:scaleX(0.9292);font-style:italic;">Text - Single Line</div>
<div class="t" style="left:1198.63px;top:1656.57px;font-size:19.8px;line-height:19.8px;color:#3c3c3c;transform:scaleX(0.9693);">Editable:</div>
<div class="t" style="left:1346.60px;top:1656.57px;font-size:19.8px;line-height:19.8px;color:#3c3c3c;letter-spacing:0.105px;">Mandatory:</div>
<div class="t" style="left:1519.82px;top:1656.57px;font-size:19.8px;line-height:19.8px;color:#3c3c3c;transform:scaleX(0.9759);">Default Value:</div>
<div style="left:1287.6px;top:1654.8px;width:18.4px;height:18.4px;border:1px solid #a6a6a6;border-radius:3.5px;background:linear-gradient(#efefef,#dcdcdc);box-shadow:0 1px 1.5px rgba(0,0,0,.18)"></div>
<svg style="left:1289.2px;top:1656.4px" width="16" height="15" viewBox="0 0 16 15"><path d="M2 7.6 L5.9 11.6 L13.4 2.6" fill="none" stroke="#3c3c3c" stroke-width="3.6"/></svg>
<div style="left:1460.6px;top:1654.8px;width:18.4px;height:18.4px;border:1px solid #a6a6a6;border-radius:3.5px;background:linear-gradient(#efefef,#dcdcdc);box-shadow:0 1px 1.5px rgba(0,0,0,.18)"></div>
<svg style="left:1650px;top:1644px" width="439" height="43"><g transform="translate(-1650,-1644)"><rect x="1654.03" y="1647.73" width="431.55" height="36.05" rx="5" fill="#fff"/><rect x="1654.03" y="1647.73" width="431.55" height="36.05" rx="5" fill="none" stroke="#c6c6c6" stroke-width="2.15"/></g></svg>
<svg style="left:1176px;top:1735px" width="970" height="28"><g transform="translate(-1176,-1735)"><rect x="1179.92" y="1738.22" width="962.95" height="21.15" rx="0.5" fill="#fff"/><rect x="1179.92" y="1738.22" width="962.95" height="21.15" rx="0.5" fill="none" stroke="#dadada" stroke-width="1.9500000000000002"/></g></svg>
</div>
</body></html>
